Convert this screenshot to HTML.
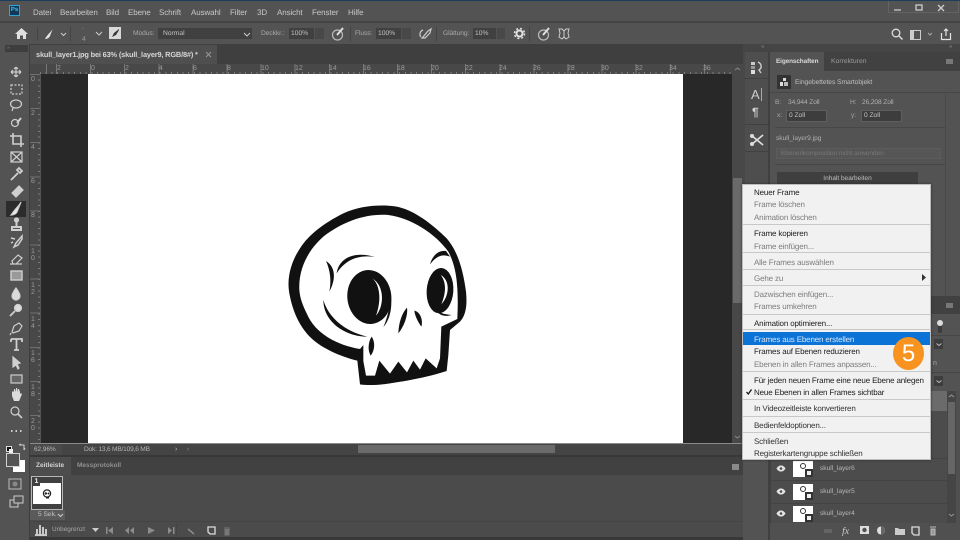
<!DOCTYPE html>
<html><head><meta charset="utf-8"><style>
html,body{margin:0;padding:0;background:#535353}
#r{position:relative;width:960px;height:540px;overflow:hidden;background:#535353;font-family:"Liberation Sans",sans-serif;font-size:8px;color:#c4c4c4;filter:blur(.35px);text-rendering:geometricPrecision}
#r div,#r span.a{position:absolute;white-space:nowrap}
.m{top:6px;font-size:8px;letter-spacing:-.1px;line-height:13px;color:#c8c8c8}
.o{font-size:6.7px;letter-spacing:-.1px;line-height:10px;color:#a8a8a8;top:29px}
.f{background:#404040;height:11px;top:28px;color:#c0c0c0;font-size:6.700px;line-height:11px;padding-left:2px;box-sizing:border-box}
.rt{top:65px;font-size:7px;line-height:8px;color:#9a9a9a}
.rl{left:31px;font-size:7px;line-height:8px;color:#9a9a9a}
.mi{left:754px;margin-top:1px;font-size:8px;letter-spacing:-.16px;line-height:12px;color:#1c1c1c}
.mi.d{color:#7d7d7d}
.sp{left:743px;width:187px;height:1px;background:#c8c8c8}
.ln{left:820px;font-size:6.600px;line-height:10px;color:#b8b8b8}
.s{font-size:6.600px;line-height:11px;color:#b0b0b0}
svg{position:absolute;overflow:visible}
</style></head><body><div id="r">
<div style="left:0;top:0;width:960px;height:1px;background:#1d3d5e"></div>
<div style="left:9px;top:5px;width:11px;height:11px;background:#0f3a57;border:1px solid #2fa3d8;box-sizing:border-box;color:#4bbcf0;font-size:6px;line-height:9px;font-weight:bold;text-align:center">Ps</div>
<div class="m" style="left:33px">Datei</div><div class="m" style="left:60px">Bearbeiten</div><div class="m" style="left:106px">Bild</div><div class="m" style="left:128px">Ebene</div><div class="m" style="left:159px">Schrift</div><div class="m" style="left:191px">Auswahl</div><div class="m" style="left:230px">Filter</div><div class="m" style="left:257px">3D</div><div class="m" style="left:277px">Ansicht</div><div class="m" style="left:312px">Fenster</div><div class="m" style="left:348px">Hilfe</div>
<div style="left:888px;top:1px;width:71px;height:12px;border:1px solid #636363;border-top:0;box-sizing:border-box"></div>
<svg style="left:888px;top:2px" width="70" height="12"><path d="M6 8h7" stroke="#bbb" stroke-width="1.5"/><rect x="28" y="3" width="6" height="5" fill="none" stroke="#ccc" stroke-width="1.3"/><path d="M50 3l6 6M56 3l-6 6" stroke="#ccc" stroke-width="1.4"/></svg>
<div style="left:0;top:21px;width:960px;height:2px;background:#454545"></div>
<svg style="left:15px;top:27px" width="14" height="13"><path d="M6.500 1L13 7h-2v5H8V8.500H5V12H2V7H0z" fill="#e0e0e0"/></svg>
<div style="left:37px;top:27px;width:1px;height:14px;background:#444"></div>
<svg style="left:44px;top:27px" width="20" height="13"><path d="M9 1C8 4 5 6 3 9c-1 1-2 3-2 3 2 0 4-1 5-3z" fill="#e4e4e4"/><path d="M17 6l2.500 2.500L22 6" fill="none" stroke="#ccc"/></svg>
<div style="left:70px;top:27px;width:1px;height:14px;background:#444"></div>
<div style="left:82px;top:25px;font-size:6px;line-height:8px;color:#999">·</div>
<div style="left:82px;top:36px;font-size:7px;line-height:8px;color:#999">4</div>
<svg style="left:95px;top:31px" width="8" height="6"><path d="M1 1l3 3 3-3" fill="none" stroke="#ccc"/></svg>
<div style="left:109px;top:27px;width:12px;height:12px;background:#d8d8d8"></div>
<svg style="left:109px;top:27px" width="12" height="12"><path d="M10 2L5 6 3 10l4-2 3-5z" fill="#333"/></svg>
<div class="o" style="left:133px">Modus:</div>
<div class="f" style="left:158px;width:94px;padding-left:5px">Normal</div>
<svg style="left:243px;top:32px" width="8" height="6"><path d="M1 1l3 3 3-3" fill="none" stroke="#ccc"/></svg>
<div class="o" style="left:261px">Deckkr.:</div>
<div class="f" style="left:289px;width:25px">100%</div><div class="f" style="left:315px;width:9px;background:#484848"></div>
<svg style="left:331px;top:27px" width="14" height="14"><circle cx="6.500" cy="8" r="5" fill="none" stroke="#bbb" stroke-width="1.200"/><path d="M12 1L6 8" stroke="#e0e0e0" stroke-width="2"/></svg>
<div style="left:350px;top:27px;width:1px;height:14px;background:#444"></div>
<div class="o" style="left:355px">Fluss:</div>
<div class="f" style="left:376px;width:25px">100%</div><div class="f" style="left:402px;width:9px;background:#484848"></div>
<svg style="left:418px;top:27px" width="16" height="14"><path d="M5 3C2 4 1 8 3 10M5 10l5-6 3-2-1 4-5 5-3 0z" fill="none" stroke="#ccc" stroke-width="1.200"/></svg>
<div style="left:436px;top:27px;width:1px;height:14px;background:#444"></div>
<div class="o" style="left:443px">Glättung:</div>
<div class="f" style="left:473px;width:23px">10%</div><div class="f" style="left:497px;width:8px;background:#484848"></div>
<svg style="left:514px;top:28px" width="12" height="12"><circle cx="5.500" cy="5.500" r="3" fill="none" stroke="#e4e4e4" stroke-width="2"/><circle cx="5.500" cy="5.500" r="5" fill="none" stroke="#e4e4e4" stroke-width="1.500" stroke-dasharray="2 2"/></svg>
<div style="left:529px;top:27px;width:1px;height:14px;background:#444"></div>
<svg style="left:537px;top:27px" width="14" height="14"><circle cx="6.500" cy="8" r="5" fill="none" stroke="#bbb" stroke-width="1.200"/><path d="M12 1L6 8" stroke="#e0e0e0" stroke-width="2"/></svg>
<svg style="left:558px;top:28px" width="12" height="12"><path d="M1 1h3l2 2 2-2h3l-1 4 1 4-3 2-2-2-2 2-3-2 1-4zM6 3v6" fill="none" stroke="#ccc"/></svg>
<svg style="left:891px;top:28px" width="70" height="14"><circle cx="5" cy="5" r="3.800" fill="none" stroke="#ddd" stroke-width="1.300"/><path d="M8 8l3.500 3.500" stroke="#ddd" stroke-width="1.400"/><rect x="19.500" y="2.500" width="10" height="9" fill="none" stroke="#ccc"/><rect x="20" y="3" width="3" height="8" fill="#ccc"/><path d="M37 5l2 2 2-2" fill="none" stroke="#aaa"/><path d="M50.500 5v6.500h9V5M55 8V1M53 3l2-2 2 2" fill="none" stroke="#e4e4e4" stroke-width="1.200"/></svg>
<div style="left:0;top:44px;width:743px;height:20px;background:#3f3f3f"></div>
<div style="left:0;top:44px;width:29px;height:20px;background:#535353"></div>
<div style="left:5px;top:45px;width:23px;height:7px;background:#3e3e3e;color:#888;font-size:5px;line-height:7px;padding-left:2px;box-sizing:border-box">»</div>
<div style="left:30px;top:45px;width:187px;height:19px;background:#4f4f4f"></div>
<div style="left:36px;top:49px;font-size:7.400px;line-height:11px;color:#d6d6d6;font-weight:bold;letter-spacing:-.17px">skull_layer1.jpg bei 63% (skull_layer9, RGB/8#) *</div>
<svg style="left:205px;top:51px" width="8" height="8"><path d="M1 1l5 5M6 1L1 6" stroke="#999"/></svg>
<div style="left:29px;top:64px;width:703px;height:10px;background:#484848"></div>
<div style="left:29px;top:64px;width:11px;height:380px;background:#484848"></div>
<div style="left:40px;top:64px;width:692px;height:10px;background:repeating-linear-gradient(90deg,#777 0,#777 1px,transparent 1px,transparent 34.1px);background-position-x:16px"></div>
<div style="left:40px;top:72px;width:692px;height:2px;background:repeating-linear-gradient(90deg,#7c7c7c 0,#7c7c7c 1px,transparent 1px,transparent 5.700px)"></div>
<div style="left:38px;top:74px;width:2px;height:370px;background:repeating-linear-gradient(180deg,#7c7c7c 0,#7c7c7c 1px,transparent 1px,transparent 5.700px)"></div>
<div style="left:29px;top:74px;width:11px;height:370px;background:repeating-linear-gradient(180deg,#6f6f6f 0,#6f6f6f 1px,transparent 1px,transparent 34.1px)"></div>
<div class="rt" style="left:57px">2</div><div class="rt" style="left:91px">0</div><div class="rt" style="left:125px">2</div><div class="rt" style="left:159px">4</div><div class="rt" style="left:193px">6</div><div class="rt" style="left:227px">8</div><div class="rt" style="left:261px">10</div><div class="rt" style="left:295px">12</div><div class="rt" style="left:329px">14</div><div class="rt" style="left:363px">16</div><div class="rt" style="left:397px">18</div><div class="rt" style="left:431px">20</div><div class="rt" style="left:465px">22</div><div class="rt" style="left:499px">24</div><div class="rt" style="left:533px">26</div><div class="rt" style="left:567px">28</div><div class="rt" style="left:601px">30</div><div class="rt" style="left:635px">32</div><div class="rt" style="left:669px">34</div><div class="rt" style="left:703px">36</div>
<div class="rl" style="top:76px">0</div><div class="rl" style="top:110px">2</div><div class="rl" style="top:144px">4</div><div class="rl" style="top:178px">6</div><div class="rl" style="top:212px">8</div>
<div class="rl" style="top:248px;line-height:7px">1<br>0</div><div class="rl" style="top:282px;line-height:7px">1<br>2</div><div class="rl" style="top:316px;line-height:7px">1<br>4</div><div class="rl" style="top:350px;line-height:7px">1<br>6</div><div class="rl" style="top:384px;line-height:7px">1<br>8</div><div class="rl" style="top:418px;line-height:7px">2<br>0</div>
<div style="left:41px;top:74px;width:691px;height:369px;background:#282828"></div>
<div style="left:88px;top:74px;width:595px;height:369px;background:#fff"></div>
<svg style="left:280px;top:195px" width="200" height="200" viewBox="0 0 600 600">
<path fill-rule="evenodd" fill="#111" d="M240 568L232 497C190 487 135 465 100 435C60 400 38 350 28 295C18 240 40 190 60 160C85 120 130 85 190 55C240 32 300 28 345 34C400 42 460 90 500 130C535 170 550 230 558 290C562 330 558 360 540 380L510 405L505 480L500 528C450 545 380 558 330 565C300 570 265 572 240 568Z M58 285C55 220 85 165 130 125C190 78 260 55 325 60C395 70 465 115 505 170C535 225 535 300 532 372L484 395L480 490L470 520L437 490L420 524L400 497L381 532L355 500L330 536L298 497L285 542L258 542L250 498L250 450L240 462C170 450 105 415 80 355C68 330 60 310 58 285Z"/>
<ellipse cx="268" cy="306" rx="66" ry="81" fill="#111" transform="rotate(-6 268 306)"/>
<path d="M276 250C295 262 308 305 288 362C315 330 312 268 276 250Z" fill="#fff"/>
<path d="M332 300C338 335 330 375 310 396C322 370 330 335 332 300Z" fill="#111"/>
<ellipse cx="480" cy="287" rx="40" ry="68" fill="#111" transform="rotate(4 480 287)"/>
<path d="M482 240C498 260 500 290 484 328C510 300 510 255 482 240Z" fill="#fff"/>
<path d="M468 345C480 355 495 358 515 360C495 366 478 362 468 345Z" fill="#111"/>
<path d="M170 235C175 195 215 165 285 186C235 178 195 195 170 235Z" fill="#111"/>
<path d="M138 198C165 215 170 250 148 290C155 255 150 225 138 198Z" fill="#111"/>
<path d="M130 315C145 365 190 408 262 425C195 425 130 380 130 315Z" fill="#111"/>
<path d="M450 208C460 175 480 165 498 168L510 185C485 175 468 185 450 208Z" fill="#111"/>
<path d="M381 338C385 365 368 400 355 415C356 385 365 355 381 338Z" fill="#111"/>
<path d="M403 347C420 350 430 375 424 395C415 382 405 365 403 347Z" fill="#111"/>
<path d="M275 425C288 445 282 470 272 482C262 465 265 440 275 425Z" fill="#111"/>
</svg>
<div style="left:732px;top:64px;width:11px;height:380px;background:#484848"></div>
<svg style="left:733px;top:66px" width="9" height="6"><path d="M2 4l2.500-2L7 4" fill="none" stroke="#888"/></svg>
<div style="left:733px;top:178px;width:9px;height:125px;background:#6a6a6a"></div>
<svg style="left:733px;top:434px" width="9" height="6"><path d="M2 2l2.500 2L7 2" fill="none" stroke="#888"/></svg>
<div style="left:29px;top:443px;width:714px;height:1px;background:#8a8a8a"></div>
<div style="left:29px;top:444px;width:714px;height:11px;background:#444"></div>
<div style="left:29px;top:444px;width:33px;height:11px;background:#4a4a4a"></div>
<div style="left:34px;top:444px;font-size:6.400px;line-height:11px;color:#b8b8b8">62,96%</div>
<div style="left:84px;top:444px;font-size:6.600px;letter-spacing:-.2px;line-height:11px;color:#b4b4b4">Dok: 13,6 MB/109,6 MB</div>
<div style="left:175px;top:444px;font-size:7px;line-height:11px;color:#bbb">›</div>
<div style="left:187px;top:444px;font-size:7px;line-height:11px;color:#888">‹</div>
<div style="left:358px;top:445px;width:197px;height:8px;background:#6a6a6a"></div>
<div style="left:29px;top:455px;width:714px;height:2px;background:#383838"></div>
<div style="left:29px;top:457px;width:714px;height:18px;background:#414141"></div>
<div style="left:29px;top:457px;width:42px;height:18px;background:#4d4d4d"></div>
<div style="left:36px;top:460px;font-size:6.500px;line-height:11px;font-weight:bold;color:#d4d4d4">Zeitleiste</div>
<div style="left:77px;top:460px;font-size:6.500px;line-height:11px;font-weight:bold;color:#8f8f8f">Messprotokoll</div>
<div style="left:732px;top:464px;width:7px;height:6px;background:#8a8a8a"></div>
<div style="left:29px;top:475px;width:714px;height:62px;background:#4b4b4b"></div>
<div style="left:29px;top:537px;width:714px;height:3px;background:#383838"></div>
<div style="left:29px;top:521px;width:714px;height:1px;background:#444"></div>
<div style="left:31px;top:476px;width:32px;height:34px;border:1px solid #b8b8b8;box-sizing:border-box;background:#404040"></div>
<div style="left:33px;top:483px;width:28px;height:21px;background:#fff"></div>
<div style="left:33px;top:478px;width:7px;height:8px;background:#404040;color:#eee;font-size:7px;line-height:8px;font-weight:bold;text-align:center">1</div>
<svg style="left:42px;top:489px" width="10" height="10"><circle cx="5" cy="4.500" r="3.600" fill="none" stroke="#222" stroke-width="1.200"/><circle cx="3.800" cy="4.500" r="1.200" fill="#222"/><circle cx="6.500" cy="4.500" r="1" fill="#222"/><path d="M4 8h3v1.500H4z" fill="#222"/></svg>
<div style="left:30px;top:510px;width:35px;height:10px;background:#5b5b5b;color:#c4c4c4;font-size:6.600px;line-height:10px;padding-left:8px;box-sizing:border-box">5 Sek.</div>
<svg style="left:57px;top:513px" width="7" height="5"><path d="M1 1l2.500 2.500L6 1" fill="none" stroke="#ccc"/></svg>
<svg style="left:34px;top:524px" width="14" height="12"><path d="M1 11h12M3 5v5M6 1v9M9 3v7M12 5v5" stroke="#c8c8c8" stroke-width="2"/></svg>
<div style="left:51px;top:523px;width:1px;height:14px;background:#444"></div>
<div style="left:52px;top:524px;font-size:6.400px;line-height:11px;color:#a8a8a8">Unbegrenzt</div>
<svg style="left:92px;top:528px" width="7" height="5"><path d="M0 0h7L3.500 4z" fill="#ccc"/></svg>
<svg style="left:105px;top:526px" width="125" height="10" fill="#8c8c8c"><path d="M1 1h1.500v7H1zM8 1v7L3 4.500zM24 1v7l-4-3.500zM29 1v7l-4-3.500zM43 1l7 3.500L43 8zM63 1v7l4-3.500zM68 1h1.500v7H68z"/><path d="M83 3l6 5" stroke="#8c8c8c" stroke-width="1.500"/><path d="M103 1h7v7h-5l-2-2z" fill="none" stroke="#ddd" stroke-width="1.300"/><path d="M119 2h6M120 3.500h4v5.500h-4z" stroke="#777" fill="#777"/></svg>
<div style="left:176px;top:523px;width:1px;height:14px;background:#444"></div>
<div style="left:29px;top:44px;width:1px;height:496px;background:#3e3e3e"></div>
<!-- toolbox -->
<div style="left:6px;top:201px;width:20px;height:16px;background:#2c2c2c"></div>
<svg style="left:6px;top:62px" width="22" height="440" fill="none" stroke="#cfcfcf" stroke-width="1.200">
<path d="M10 5v10M5 10h10M10 5l-2 2M10 5l2 2M10 15l-2-2M10 15l2-2M5 10l2-2M5 10l2 2M15 10l-2-2M15 10l-2 2"/>
<rect x="5" y="23" width="11" height="9" stroke-dasharray="2 1.500"/>
<ellipse cx="10" cy="42" rx="5.500" ry="4"/><path d="M7 46l-1 3"/>
<circle cx="9" cy="61" r="3.500"/><path d="M15 56l-4 5" stroke-width="2"/>
<path d="M7 71v11h11M4 74h11v11" stroke-width="1.600"/>
<rect x="5" y="90" width="11" height="10"/><path d="M5 90l11 10M16 90L5 100"/>
<path d="M5 118l7-7M13 106l3 3-2 2-3-3z" stroke-width="1.800"/>
<path d="M6 131l7-7 4 4-7 7z" fill="#cfcfcf"/>
<path d="M15 140C13 144 10 146 8 149c-1 1-2 3-3 4 3 0 5-1 6-3z" fill="#eee"/>
<path d="M6 165h9v3H6zM10.500 158v7" stroke-width="2"/><circle cx="10.500" cy="158" r="2" fill="#cfcfcf"/>
<path d="M16 174l-6 7-2 4 4-2 4-6zM5 176l4 1M5 181l2-1" stroke-width="1.500"/>
<path d="M6 199l6-6 4 3-6 6H7zM4 202h12"/>
<rect x="5" y="209" width="11" height="9" fill="#999" stroke-width="1.400"/>
<path d="M10 226c-3 4-4 6-4 8a4 4 0 0 0 8 0c0-2-1-4-4-8z" fill="#dcdcdc"/>
<circle cx="12" cy="246" r="3.500" fill="#dcdcdc"/><path d="M9 249l-5 5" stroke-width="1.800"/>
<path d="M6 270l2-6 5-3 3 3-3 5-6 2zM5 271l-1 2"/>
<path d="M5 277h11v3M10.500 277v11M8 288h5M5 277v3" stroke-width="1.800"/>
<path d="M7 295l7 6-3 1 2 4-1 1-2-4-3 2z" fill="#cfcfcf"/>
<rect x="5" y="313" width="11" height="8" fill="#666" stroke="#ccc"/>
<path d="M6 333v-4l1-1 1 1v-3l1 0 1 3v-4l1 0 1 4v-3l1 0 1 3v2l1-1 1 1-2 5-1 2H8z" fill="#dcdcdc" stroke="none" transform="translate(0 1)"/>
<circle cx="9" cy="349" r="4"/><path d="M12 352l4 4" stroke-width="1.600"/>
<path d="M5 369h1.500M9.500 369h1.500M14 369h1.500" stroke-width="2"/>
</svg>
<div style="left:6px;top:446px;width:4px;height:4px;background:#111;border:1px solid #ddd"></div>
<div style="left:9px;top:449px;width:4px;height:4px;background:#eee"></div>
<svg style="left:18px;top:443px" width="8" height="9"><path d="M1 2h5v5M1 2l2-1M6 7l1-2" fill="none" stroke="#ccc"/></svg>
<div style="left:13px;top:460px;width:12px;height:12px;background:#fff"></div>
<div style="left:6px;top:453px;width:12px;height:12px;background:#535353;border:1px solid #d0d0d0"></div>
<svg style="left:8px;top:478px" width="18" height="12"><rect x="1" y="1" width="12" height="10" fill="none" stroke="#bbb"/><circle cx="7" cy="6" r="2.500" fill="#888"/></svg>
<svg style="left:8px;top:495px" width="18" height="14"><rect x="2" y="5" width="8" height="7" fill="none" stroke="#ccc"/><rect x="6" y="1" width="9" height="7" fill="#535353" stroke="#ccc"/></svg>
<!-- dock -->
<div style="left:743px;top:44px;width:217px;height:8px;background:#454545"></div>
<div style="left:761px;top:44px;font-size:6px;line-height:7px;color:#888">«</div>
<div style="left:949px;top:44px;font-size:6px;line-height:7px;color:#888">»</div>
<div style="left:743px;top:52px;width:2px;height:132px;background:#484848"></div>
<div style="left:745px;top:52px;width:24px;height:132px;background:#4e4e4e"></div>
<div style="left:745px;top:78px;width:24px;height:1px;background:#414141"></div>
<div style="left:745px;top:124px;width:24px;height:1px;background:#414141"></div>
<div style="left:745px;top:151px;width:24px;height:1px;background:#414141"></div>
<div style="left:768px;top:52px;width:2px;height:488px;background:#404040"></div>
<svg style="left:749px;top:61px" width="16" height="14"><rect x="2" y="1" width="4" height="3" fill="#ccc"/><rect x="2" y="5" width="4" height="3" fill="#999"/><rect x="2" y="9" width="4" height="4" fill="#ddd"/><path d="M9 1c4 2 4 6 1 8l2 3" fill="none" stroke="#ccc" stroke-width="1.400"/></svg>
<div style="left:751px;top:87px;font-size:13px;line-height:15px;color:#d0d0d0">A</div><div style="left:761px;top:88px;width:1px;height:13px;background:#aaa"></div>
<div style="left:752px;top:105px;font-size:12px;line-height:14px;color:#d0d0d0;font-weight:bold">¶</div>
<svg style="left:749px;top:133px" width="16" height="14"><path d="M2 2l12 10M14 2L2 12" stroke="#ddd" stroke-width="1.700"/><circle cx="3" cy="11" r="2" fill="#ddd"/><circle cx="3" cy="3" r="2" fill="#ddd"/></svg>
<!-- properties -->
<div style="left:770px;top:52px;width:190px;height:19px;background:#414141"></div>
<div style="left:770px;top:52px;width:54px;height:19px;background:#535353"></div>
<div style="left:776px;top:56px;font-size:6.400px;letter-spacing:-.1px;line-height:11px;font-weight:bold;color:#d8d8d8">Eigenschaften</div>
<div style="left:831px;top:56px;font-size:6.800px;line-height:11px;color:#9a9a9a">Korrekturen</div>
<div style="left:946px;top:59px;width:7px;height:5px;background:#777"></div>
<div style="left:777px;top:75px;width:14px;height:14px;background:#333"></div>
<svg style="left:779px;top:77px" width="10" height="10"><rect x="4" y="1" width="3" height="3" fill="#ddd"/><rect x="1" y="5" width="3" height="4" fill="#ddd"/><rect x="5" y="5" width="4" height="4" fill="#bbb"/></svg>
<div style="left:795px;top:77px;font-size:6.800px;letter-spacing:-.1px;line-height:11px;color:#bdbdbd">Eingebettetes Smartobjekt</div>
<div style="left:770px;top:92px;width:190px;height:1px;background:#474747"></div>
<div class="s" style="left:775px;top:97px;color:#a8a8a8">B:</div><div class="s" style="left:788px;top:97px;letter-spacing:-.1px">34,944 Zoll</div>
<div class="s" style="left:850px;top:97px;color:#a8a8a8">H:</div><div class="s" style="left:862px;top:97px;letter-spacing:-.1px">26,208 Zoll</div>
<div class="s" style="left:777px;top:110px;color:#a8a8a8">x:</div>
<div style="left:786px;top:110px;width:41px;height:12px;background:#3d3d3d;border:1px solid #5f5f5f;box-sizing:border-box;font-size:6.600px;line-height:10px;padding-left:2px;color:#c4c4c4">0 Zoll</div>
<div class="s" style="left:851px;top:110px;color:#a8a8a8">y:</div>
<div style="left:861px;top:110px;width:41px;height:12px;background:#3d3d3d;border:1px solid #5f5f5f;box-sizing:border-box;font-size:6.600px;line-height:10px;padding-left:2px;color:#c4c4c4">0 Zoll</div>
<div style="left:775px;top:127px;width:170px;height:1px;background:#474747"></div>
<div class="s" style="left:776px;top:133px">skull_layer9.jpg</div>
<div style="left:776px;top:148px;width:165px;height:11px;background:#565656;border:1px solid #5c5c5c;box-sizing:border-box;font-size:6.400px;line-height:9px;padding-left:4px;color:#787878">Ebenenkomposition nicht anwenden</div>
<div style="left:775px;top:164px;width:170px;height:1px;background:#474747"></div>
<div style="left:777px;top:172px;width:141px;height:14px;background:#3f3f3f;text-align:center;font-size:6.500px;line-height:13px;color:#c0c0c0">Inhalt bearbeiten</div>
<div style="left:945px;top:92px;width:1px;height:204px;background:#4a4a4a"></div>
<!-- right panels behind menu -->
<div style="left:770px;top:296px;width:190px;height:18px;background:#414141"></div>
<div style="left:946px;top:303px;width:7px;height:5px;background:#777"></div>
<div style="left:938px;top:322px;width:4px;height:11px;background:#3b3b3b;border-radius:2px"></div>
<div style="left:937px;top:320px;width:6px;height:6px;background:#ddd;border-radius:50%"></div>
<div style="left:931px;top:335px;width:29px;height:1px;background:#474747"></div>
<div style="left:934px;top:339px;width:9px;height:10px;background:#3d3d3d"></div>
<svg style="left:936px;top:343px" width="6" height="4"><path d="M.5.5l2.500 2 2.500-2" fill="none" stroke="#bbb"/></svg>
<div style="left:933px;top:359px;font-size:7px;line-height:10px;color:#a8a8a8">n</div>
<div style="left:931px;top:372px;width:29px;height:1px;background:#474747"></div>
<div style="left:934px;top:376px;width:9px;height:10px;background:#3d3d3d"></div>
<svg style="left:936px;top:380px" width="6" height="4"><path d="M.5.5l2.500 2 2.500-2" fill="none" stroke="#bbb"/></svg>
<div style="left:770px;top:391px;width:177px;height:20px;background:#6b6b6b"></div>
<div style="left:770px;top:411px;width:177px;height:112px;background:#4c4c4c"></div>
<div style="left:771px;top:458px;width:177px;height:1px;background:#434343"></div>
<div style="left:771px;top:480px;width:177px;height:1px;background:#434343"></div>
<div style="left:771px;top:503px;width:177px;height:1px;background:#434343"></div>
<div style="left:947px;top:391px;width:9px;height:132px;background:#454545"></div>
<div style="left:948px;top:402px;width:7px;height:72px;background:#666"></div>
<svg style="left:948px;top:394px" width="7" height="5"><path d="M1 3l2.500-2L6 3" fill="none" stroke="#999"/></svg>
<svg style="left:948px;top:513px" width="7" height="5"><path d="M1 1l2.500 2L6 1" fill="none" stroke="#999"/></svg>
<div style="left:770px;top:411px;width:1px;height:129px;background:#404040"></div>
<div style="left:956px;top:391px;width:4px;height:149px;background:#505050"></div>
<svg style="left:776px;top:465px" width="10" height="7"><path d="M.5 3.500C2 1 3.500.5 5 .5S8 1 9.500 3.500C8 6 6.500 6.500 5 6.500S2 6 .5 3.500z" fill="#e4e4e4"/><circle cx="5" cy="3.500" r="1.300" fill="#4c4c4c"/></svg>
<svg style="left:776px;top:488px" width="10" height="7"><path d="M.5 3.500C2 1 3.500.5 5 .5S8 1 9.500 3.500C8 6 6.500 6.500 5 6.500S2 6 .5 3.500z" fill="#e4e4e4"/><circle cx="5" cy="3.500" r="1.300" fill="#4c4c4c"/></svg>
<svg style="left:776px;top:510px" width="10" height="7"><path d="M.5 3.500C2 1 3.500.5 5 .5S8 1 9.500 3.500C8 6 6.500 6.500 5 6.500S2 6 .5 3.500z" fill="#e4e4e4"/><circle cx="5" cy="3.500" r="1.300" fill="#4c4c4c"/></svg>
<div style="left:793px;top:461px;width:20px;height:16px;background:#fff"></div><div style="left:793px;top:484px;width:20px;height:16px;background:#fff"></div><div style="left:793px;top:506px;width:20px;height:16px;background:#fff"></div>
<div style="left:805px;top:469px;width:8px;height:8px;background:#333"></div><div style="left:805px;top:492px;width:8px;height:8px;background:#333"></div><div style="left:805px;top:514px;width:8px;height:8px;background:#333"></div>
<div style="left:807px;top:471px;width:4px;height:4px;background:#eee"></div><div style="left:807px;top:494px;width:4px;height:4px;background:#eee"></div><div style="left:807px;top:516px;width:4px;height:4px;background:#eee"></div>
<div style="left:800px;top:463px;width:4px;height:4px;border:1px solid #333;border-radius:50%"></div><div style="left:800px;top:486px;width:4px;height:4px;border:1px solid #333;border-radius:50%"></div><div style="left:800px;top:508px;width:4px;height:4px;border:1px solid #333;border-radius:50%"></div>
<div class="ln" style="top:464px">skull_layer6</div><div class="ln" style="top:487px">skull_layer5</div><div class="ln" style="top:509px">skull_layer4</div>
<div style="left:770px;top:523px;width:190px;height:17px;background:#505050"></div>
<svg style="left:823px;top:524px" width="130" height="14"><path d="M1 7h8" stroke="#777" stroke-width="3"/><path d="M1 7h8" stroke="#505050" stroke-width="1"/></svg>
<div style="left:842px;top:525px;font-size:10px;line-height:13px;font-style:italic;font-family:'Liberation Serif',serif;color:#ccc">fx</div>
<svg style="left:860px;top:525px" width="90" height="13"><rect x="0" y="1" width="9" height="8" fill="#ddd"/><circle cx="4.500" cy="5" r="2.200" fill="#505050"/><circle cx="21" cy="5.500" r="4" fill="#ddd"/><path d="M21 1.500a4 4 0 0 1 0 8z" fill="#666"/><path d="M35 3h3l1 1h6v6h-10z" fill="#ccc"/><path d="M52 2h7v8h-5l-2-2z" fill="none" stroke="#ddd" stroke-width="1.300"/><path d="M70 2h6M71 4h4v6h-4z" stroke="#bbb" fill="#999"/></svg>
<!-- menu -->
<div style="left:742px;top:184px;width:189px;height:276px;background:#f1f1f1;border:1px solid #bdbdbd;box-sizing:border-box;box-shadow:0 0 2px #2a2a2a"></div>
<div class="mi" style="top:186px">Neuer Frame</div>
<div class="mi d" style="top:198px">Frame löschen</div>
<div class="mi d" style="top:211px">Animation löschen</div>
<div class="sp" style="top:224px"></div>
<div class="mi" style="top:227px">Frame kopieren</div>
<div class="mi d" style="top:240px">Frame einfügen...</div>
<div class="sp" style="top:252px"></div>
<div class="mi d" style="top:256px">Alle Frames auswählen</div>
<div class="sp" style="top:269px"></div>
<div class="mi d" style="top:272px">Gehe zu</div>
<svg style="left:922px;top:274px" width="5" height="7"><path d="M0 0l4 3.500L0 7z" fill="#333"/></svg>
<div class="sp" style="top:285px"></div>
<div class="mi d" style="top:288px">Dazwischen einfügen...</div>
<div class="mi d" style="top:300px">Frames umkehren</div>
<div class="sp" style="top:314px"></div>
<div class="mi" style="top:317px">Animation optimieren...</div>
<div class="sp" style="top:329px"></div>
<div style="left:743px;top:332px;width:187px;height:13px;background:#0b72d6"></div>
<div class="mi" style="top:333px;color:#d9e8f7">Frames aus Ebenen erstellen</div>
<div class="mi" style="top:345px">Frames auf Ebenen reduzieren</div>
<div class="mi d" style="top:358px">Ebenen in allen Frames anpassen...</div>
<div class="sp" style="top:371px"></div>
<div class="mi" style="top:374px">Für jeden neuen Frame eine neue Ebene anlegen</div>
<div class="mi" style="top:386px">Neue Ebenen in allen Frames sichtbar</div>
<svg style="left:746px;top:389px" width="6" height="6"><path d="M.5 3l1.800 2L5.500.5" fill="none" stroke="#111" stroke-width="1.300"/></svg>
<div class="sp" style="top:399px"></div>
<div class="mi" style="top:402px;color:#333">In Videozeitleiste konvertieren</div>
<div class="sp" style="top:416px"></div>
<div class="mi" style="top:419px;color:#333">Bedienfeldoptionen...</div>
<div class="sp" style="top:432px"></div>
<div class="mi" style="top:435px;color:#333">Schließen</div>
<div class="mi" style="top:447px;color:#333">Registerkartengruppe schließen</div>
<div style="left:893px;top:337px;width:31px;height:33px;border-radius:50%;background:#f7931e;color:#fff;font-size:24px;line-height:33px;text-align:center">5</div>
</div></body></html>
